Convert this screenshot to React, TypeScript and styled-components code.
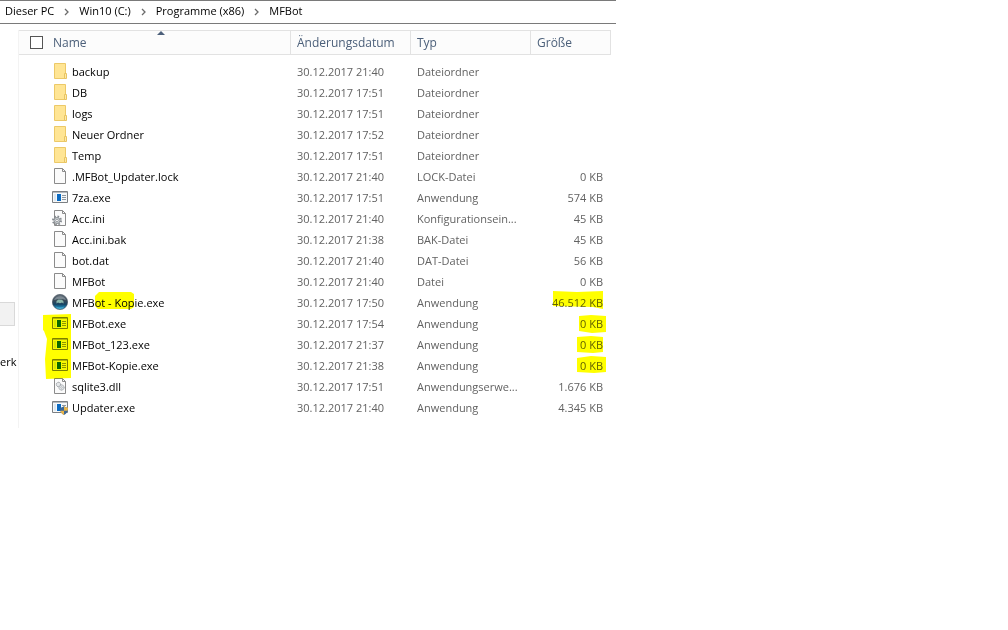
import React from 'react';
import styled, { createGlobalStyle } from 'styled-components';

const Global = createGlobalStyle`
  *, *::before, *::after { box-sizing: border-box; }
  body { margin: 0; background: #fff; color: #000; font: 11px/20px "Open Sans", "Noto Sans", sans-serif; }
`;

const Window = styled.main`
  max-width: 616px;
  background: #fff;
`;

const AddressBar = styled.nav`
  height: 24px;
  padding-left: 5px;
  border-top: 1px solid #7a7a7a;
  border-bottom: 1px solid #7a7a7a;
`;

const Crumbs = styled.ol`
  display: flex;
  align-items: center;
  margin: 0;
  padding: 0;
  list-style: none;
`;

const Crumb = styled.li`
  display: flex;
  align-items: center;
  white-space: nowrap;
`;

const CrumbLink = styled.a`
  color: #000;
  text-decoration: none;
`;

const Chevron = styled.svg`
  width: 5px;
  height: 8px;
  margin: 2px 10px 0;
`;

const Body = styled.div`
  display: flex;
  padding-top: 6px;
`;

const NavPane = styled.aside`
  flex: 0 0 19px;
  overflow: hidden;
  border-right: 1px solid #f3f3f3;
`;

const NavSelection = styled.div`
  height: 24px;
  margin: 272px 3px 0 0;
  border: 1px solid #d9d9d9;
  border-left: 0;
  background: #f2f2f2;
`;

const NavLabel = styled.div`
  margin-top: 26px;
`;

const FileArea = styled.section`
  position: relative;
  flex: 1;
  min-width: 0;
  padding: 0 5px 10px 0;
`;

const Table = styled.table`
  width: 100%;
  table-layout: fixed;
  border-collapse: separate;
  border-spacing: 0;

  tbody::before { content: ""; display: block; height: 6px; }
`;

const Col = styled.col<{ $w?: number }>`
  width: ${p => (p.$w ? `${p.$w}px` : 'auto')};
`;

const HeadCell = styled.th`
  position: relative;
  height: 25px;
  padding: 0 0 0 6px;
  border: 1px solid #e2e2e2;
  border-left: 0;
  background: #fcfcfc;
  color: #4c607a;
  font-size: 12px;
  font-weight: 400;
  text-align: left;
`;

const HeadName = styled.div`
  display: flex;
  align-items: center;
  gap: 10px;
  padding-left: 5px;
`;

const CheckBox = styled.input`
  appearance: none;
  width: 13px;
  height: 13px;
  margin: 0;
  border: 1px solid #555;
  background: #fff;
`;

const SortArrow = styled.svg`
  position: absolute;
  top: 0;
  left: 50%;
  width: 8px;
  height: 4px;
  margin-left: 2px;
`;

const Cell = styled.td<{ $right?: boolean }>`
  height: 21px;
  padding: 0 8px 0 6px;
  overflow: hidden;
  color: #626262;
  text-align: ${p => (p.$right ? 'right' : 'left')};
  text-overflow: ellipsis;
  white-space: nowrap;
`;

const NameCell = styled.div`
  display: flex;
  align-items: flex-start;
  gap: 4px;
  padding-left: 27px;
  color: #000;
`;

const Icon = styled.svg`
  flex: none;
  width: 16px;
  height: 16px;
  margin-top: 1px;
`;

const MarkerLayer = styled.svg`
  position: absolute;
  top: 0;
  left: 0;
  width: 597px;
  height: 360px;
  mix-blend-mode: multiply;
  pointer-events: none;
`;

type Kind = 'folder' | 'file' | 'ini' | 'exe' | 'bot' | 'dll' | 'updater';

const Page = () => (
  <>
    <path d="M2.5.5h8l3 3v12h-11z" fill="#fbfbfb" stroke="#8b8b8b" />
    <path d="M10.5.5v3h3" fill="none" stroke="#8b8b8b" />
  </>
);

const Program = () => (
  <>
    <path d="M.5 2.5h15v11H.5z" fill="#f6f8f9" stroke="#7b7f83" />
    <path d="M1 3h14v1H1z" fill="#b4b9be" />
    <path d="M2 5h2v7H2z" fill="#dde8f1" />
    <path d="M5 5h4v7H5z" fill="#0a6ac2" />
    <path d="M10 6.5h4M10 8.5h4M10 10.5h4" stroke="#8e979f" />
  </>
);

const drawings: Record<Kind, React.ReactNode> = {
  folder: (
    <>
      <path d="M2.5.5h11v15h-11z" fill="#ffe594" stroke="#ecc968" />
      <path d="M12.5 10.5h2v5h-2z" fill="#ffe9a6" stroke="#e8c462" />
    </>
  ),
  file: <Page />,
  ini: (
    <>
      <Page />
      <circle cx="5" cy="10.5" r="4" fill="none" stroke="#858a8f" strokeWidth="2" strokeDasharray="1.6 1.54" />
      <circle cx="5" cy="10.5" r="3" fill="#d5d9dc" stroke="#8b9095" />
      <circle cx="5" cy="10.5" r="1.3" fill="#fff" stroke="#858a8f" strokeWidth=".8" />
    </>
  ),
  exe: <Program />,
  bot: (
    <>
      <defs>
        <linearGradient id="globe" x1="0" y1="0" x2="0" y2="1">
          <stop offset="0" stopColor="#66717c" />
          <stop offset=".4" stopColor="#3a4c59" />
          <stop offset=".65" stopColor="#174463" />
          <stop offset=".85" stopColor="#1b7fae" />
          <stop offset="1" stopColor="#56c0e0" />
        </linearGradient>
      </defs>
      <circle cx="8" cy="8" r="7.6" fill="url(#globe)" stroke="#46535f" strokeWidth=".7" />
      <path d="M2 6C3.5 1.5 12 .5 14 6 11.5 4.500 5 4.500 2 6z" fill="#929da5" opacity=".7" />
      <path d="M4.500 9.500V7l2-1.500 3.500.3 1.500 1.700v2L10 8.500l-2 .7-2-.7z" fill="#8cb8ac" />
      <path d="M4 12.500c2 1.800 6 1.800 8 0-1 2.300-7 2.300-8 0z" fill="#7fe0f0" opacity=".8" />
    </>
  ),
  dll: (
    <>
      <Page />
      <circle cx="6.5" cy="6.5" r="2.2" fill="#e4e7e9" stroke="#92979c" strokeDasharray="1.2 .5" />
      <circle cx="9.5" cy="9.5" r="2.6" fill="#e4e7e9" stroke="#92979c" strokeDasharray="1.2 .5" />
      <circle cx="9.5" cy="9.5" r=".8" fill="#fff" stroke="#92979c" strokeWidth=".5" />
    </>
  ),
  updater: (
    <>
      <Program />
      <path d="M8 8.5c1.5 0 3-.5 4-1.5 1 1 2.5 1.5 4 1.5 0 3.5-1 6-4 7.5-3-1.5-4-4-4-7.5z" fill="#3c6795" />
      <path d="M12 7c1 1 2.500 1.500 4 1.500 0 1.200-.1 2.300-.4 3.200H12zM12 11.700H8.400c.6 2 1.700 3.400 3.600 4.300z" fill="#e9b54a" />
    </>
  ),
};

interface Entry { icon: Kind; name: string; date: string; type: string; size?: string }

const entries: Entry[] = [
  { icon: 'folder', name: 'backup', date: '30.12.2017 21:40', type: 'Dateiordner' },
  { icon: 'folder', name: 'DB', date: '30.12.2017 17:51', type: 'Dateiordner' },
  { icon: 'folder', name: 'logs', date: '30.12.2017 17:51', type: 'Dateiordner' },
  { icon: 'folder', name: 'Neuer Ordner', date: '30.12.2017 17:52', type: 'Dateiordner' },
  { icon: 'folder', name: 'Temp', date: '30.12.2017 17:51', type: 'Dateiordner' },
  { icon: 'file', name: '.MFBot_Updater.lock', date: '30.12.2017 21:40', type: 'LOCK-Datei', size: '0 KB' },
  { icon: 'exe', name: '7za.exe', date: '30.12.2017 17:51', type: 'Anwendung', size: '574 KB' },
  { icon: 'ini', name: 'Acc.ini', date: '30.12.2017 21:40', type: 'Konfigurationsein...', size: '45 KB' },
  { icon: 'file', name: 'Acc.ini.bak', date: '30.12.2017 21:38', type: 'BAK-Datei', size: '45 KB' },
  { icon: 'file', name: 'bot.dat', date: '30.12.2017 21:40', type: 'DAT-Datei', size: '56 KB' },
  { icon: 'file', name: 'MFBot', date: '30.12.2017 21:40', type: 'Datei', size: '0 KB' },
  { icon: 'bot', name: 'MFBot - Kopie.exe', date: '30.12.2017 17:50', type: 'Anwendung', size: '46.512 KB' },
  { icon: 'exe', name: 'MFBot.exe', date: '30.12.2017 17:54', type: 'Anwendung', size: '0 KB' },
  { icon: 'exe', name: 'MFBot_123.exe', date: '30.12.2017 21:37', type: 'Anwendung', size: '0 KB' },
  { icon: 'exe', name: 'MFBot-Kopie.exe', date: '30.12.2017 21:38', type: 'Anwendung', size: '0 KB' },
  { icon: 'dll', name: 'sqlite3.dll', date: '30.12.2017 17:51', type: 'Anwendungserwe...', size: '1.676 KB' },
  { icon: 'updater', name: 'Updater.exe', date: '30.12.2017 21:40', type: 'Anwendung', size: '4.345 KB' },
];

const path = ['Dieser PC', 'Win10 (C:)', 'Programme (x86)', 'MFBot'];

export default function App() {
  return (
    <>
      <Global />
      <Window>
        <AddressBar aria-label="Pfad">
          <Crumbs>
            {path.map((part, i) => (
              <Crumb key={part}>
                {i > 0 && (
                  <Chevron viewBox="0 0 5 8" aria-hidden="true">
                    <path d="M1 1l3 3-3 3" fill="none" stroke="#6b6b6b" strokeWidth="1.3" />
                  </Chevron>
                )}
                <CrumbLink href="#">{part}</CrumbLink>
              </Crumb>
            ))}
          </Crumbs>
        </AddressBar>
        <Body>
          <NavPane>
            <NavSelection />
            <NavLabel>erk</NavLabel>
          </NavPane>
          <FileArea>
            <Table>
              <colgroup>
                <Col />
                <Col $w={120} />
                <Col $w={120} />
                <Col $w={80} />
              </colgroup>
              <thead>
                <tr>
                  <HeadCell>
                    <HeadName>
                      <CheckBox type="checkbox" id="all" aria-label="Alle auswählen" />
                      <label htmlFor="all">Name</label>
                    </HeadName>
                    <SortArrow viewBox="0 0 8 4" aria-hidden="true">
                      <path d="M0 4l4-4 4 4z" fill="#4c607a" />
                    </SortArrow>
                  </HeadCell>
                  <HeadCell>Änderungsdatum</HeadCell>
                  <HeadCell>Typ</HeadCell>
                  <HeadCell>Größe</HeadCell>
                </tr>
              </thead>
              <tbody>
                {entries.map(e => (
                  <tr key={e.name}>
                    <Cell>
                      <NameCell>
                        <Icon viewBox="0 0 16 16" aria-hidden="true">{drawings[e.icon]}</Icon>
                        {e.name}
                      </NameCell>
                    </Cell>
                    <Cell>{e.date}</Cell>
                    <Cell>{e.type}</Cell>
                    <Cell $right>{e.size}</Cell>
                  </tr>
                ))}
              </tbody>
            </Table>
            <MarkerLayer viewBox="0 0 597 360" aria-hidden="true" fill="#ffff00">
              <path d="M76 266l4-4h32l3 2v13l-3 2H79l-3-3z" />
              <path d="M24 285l28-1v64l-25 1-1-20 2-20-3-8-1-1z" />
              <path d="M534 261l24 1 26-1v18l-10-2-40-1z" />
              <path d="M560 286l12-1 15 1v16l-14 1-13-2z" />
              <path d="M558 307l14-1 12 1v15l-10 1-16-1z" />
              <path d="M558 328l14-2 15 1v15l-12 1-17-1z" />
            </MarkerLayer>
          </FileArea>
        </Body>
      </Window>
    </>
  );
}
